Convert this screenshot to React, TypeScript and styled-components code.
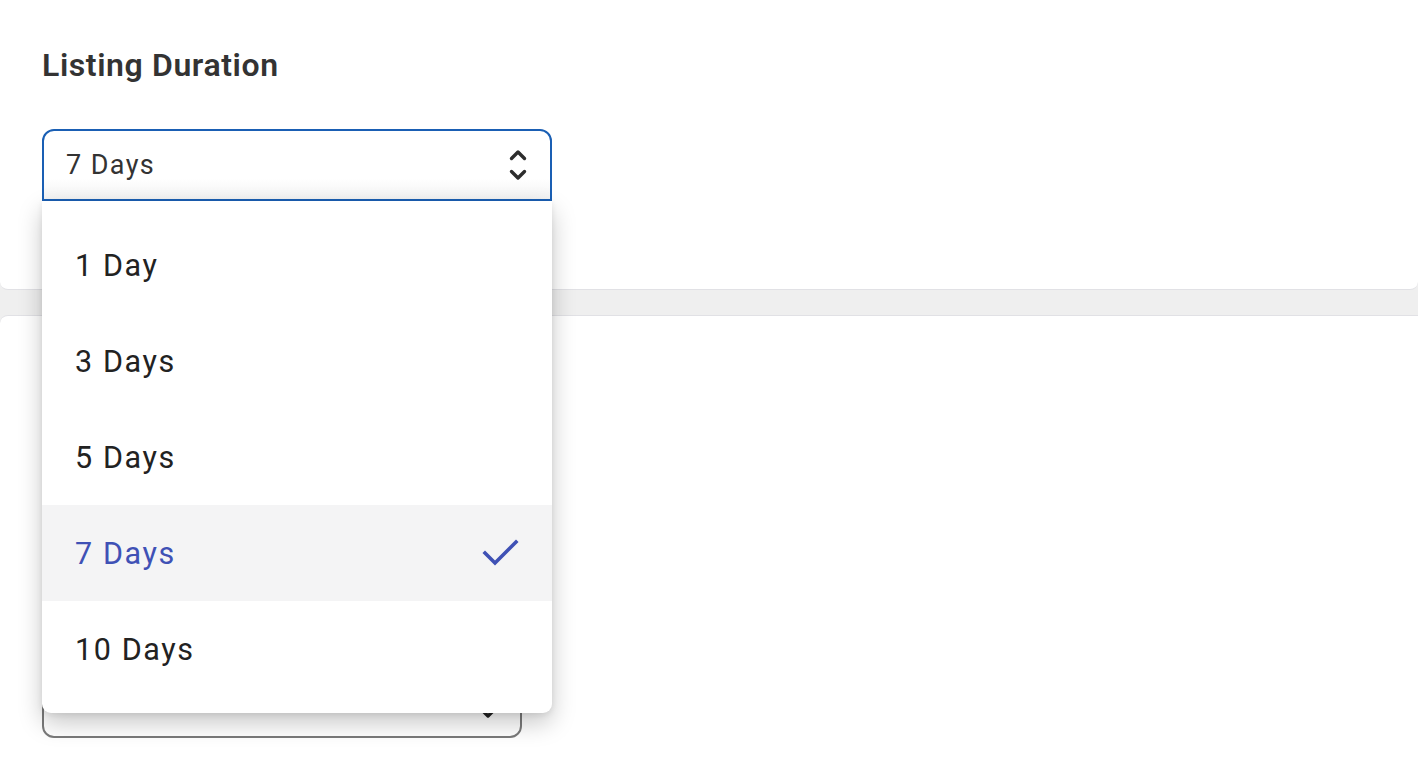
import React from "react";
import styled, { createGlobalStyle } from "styled-components";

const Global = createGlobalStyle`
  html, body { margin: 0; padding: 0; background: #efefef; }
  body { font-family: Roboto, "Liberation Sans", Arial, sans-serif; }
`;

const Page = styled.div`
  width: 1418px;
  height: 762px;
  overflow: hidden;
  display: flex;
  flex-direction: column;
  gap: 25px;
  background: #efefef;
`;

const Card = styled.section<{ $h: number; $top?: boolean }>`
  background: #ffffff;
  height: ${(p) => p.$h}px;
  box-sizing: border-box;
  padding: 44px 42px 0;
  border-radius: ${(p) => (p.$top ? "0 0 8px 8px" : "8px 0 0 0")};
  ${(p) => (p.$top ? "border-bottom: 1px solid #e1e1e5;" : "border-top: 1px solid #e1e1e5;")}
  display: flex;
  flex-direction: column;
  flex-shrink: 0;
`;

const Title = styled.h2`
  margin: 0 0 43px;
  font-size: 32px;
  line-height: 42px;
  font-weight: 600;
  color: #333333;
  letter-spacing: 0.6px;
`;

const Field = styled.div`
  position: relative;
  width: 510px;
  z-index: 5;
`;

const SelectBox = styled.div`
  height: 72px;
  box-sizing: border-box;
  border: 2px solid #1a5fb4;
  border-radius: 12px 12px 0 0;
  background: linear-gradient(#ffffff 70%, #f3f3f3);
  display: flex;
  align-items: center;
  justify-content: space-between;
  padding: 0 20px 0 22px;
  font-size: 27px;
  letter-spacing: 1.4px;
  color: #333333;
`;

const Menu = styled.ul`
  position: absolute;
  top: 100%;
  left: 0;
  width: 510px;
  margin: 0;
  padding: 16px 0;
  list-style: none;
  background: #ffffff;
  border-radius: 0 0 9px 9px;
  box-shadow: 0 10px 24px rgba(0, 0, 0, 0.22), 0 2px 6px rgba(0, 0, 0, 0.08);
`;

const Item = styled.li<{ $selected?: boolean }>`
  height: 96px;
  display: flex;
  align-items: center;
  justify-content: space-between;
  padding: 0 30px 0 33px;
  font-size: 30.5px;
  letter-spacing: 1.6px;
  color: ${(p) => (p.$selected ? "#3f51b5" : "#222222")};
  background: ${(p) => (p.$selected ? "#f4f4f5" : "transparent")};
`;

const Card2Body = styled.div`
  flex: 1;
  display: flex;
  flex-direction: column;
  justify-content: flex-end;
  padding-bottom: 37px;
`;

const SecondSelect = styled.div`
  width: 480px;
  height: 72px;
  box-sizing: border-box;
  border: 2px solid #7a7a7a;
  border-radius: 12px;
  display: flex;
  align-items: flex-end;
  justify-content: flex-end;
  padding: 0 22px 16px 0;
  color: #222;
`;

const Chevrons = () => (
  <svg width="24" height="40" viewBox="0 0 24 40" fill="none" stroke="#2d2d2d" strokeWidth="3.4" strokeLinecap="round" strokeLinejoin="round">
    <path d="M5.5 13.5 L12 7 L18.5 13.5" />
    <path d="M5.5 26.5 L12 33 L18.5 26.5" />
  </svg>
);

const Check = () => (
  <svg width="42" height="34" viewBox="0 0 42 34" fill="none" stroke="#3f51b5" strokeWidth="3.6" strokeLinecap="square">
    <path d="M5 17 L15 27 L36 6" />
  </svg>
);

const Down = () => (
  <svg width="20" height="14" viewBox="0 0 20 14" fill="none" stroke="#222" strokeWidth="3.4" strokeLinecap="round" strokeLinejoin="round">
    <path d="M3 3 L10 10 L17 3" />
  </svg>
);

const options = ["1 Day", "3 Days", "5 Days", "7 Days", "10 Days"];
const selected = "7 Days";

export default function App() {
  return (
    <>
      <Global />
      <Page>
        <Card $h={290} $top>
          <Title>Listing Duration</Title>
          <Field>
            <SelectBox>
              <span>{selected}</span>
              <Chevrons />
            </SelectBox>
            <Menu>
              {options.map((o) => (
                <Item key={o} $selected={o === selected}>
                  <span>{o}</span>
                  {o === selected && <Check />}
                </Item>
              ))}
            </Menu>
          </Field>
        </Card>
        <Card $h={460}>
          <Card2Body>
            <SecondSelect>
              <Down />
            </SecondSelect>
          </Card2Body>
        </Card>
      </Page>
    </>
  );
}
